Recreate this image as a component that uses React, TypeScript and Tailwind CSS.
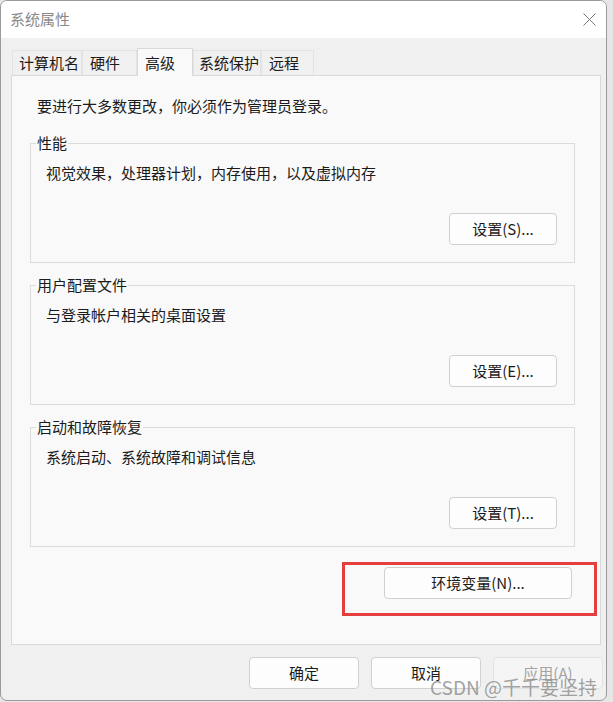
const font = { fontFamily: '"Noto Sans CJK SC", "Noto Sans", sans-serif' };

const tabs = [
  { label: '计算机名', w: 'w-[70px] pl-[6px]' },
  { label: '硬件', w: 'w-[55px] pl-[7px]' },
  { label: '高级', w: 'w-[56px] pl-[7px]', active: true },
  { label: '系统保护', w: 'w-[68px] pl-[5px]' },
  { label: '远程', w: 'w-[53px] pl-[7px]' },
];

const groups = [
  { title: '性能', desc: '视觉效果，处理器计划，内存使用，以及虚拟内存', btn: '设置(S)...' },
  { title: '用户配置文件', desc: '与登录帐户相关的桌面设置', btn: '设置(E)...' },
  { title: '启动和故障恢复', desc: '系统启动、系统故障和调试信息', btn: '设置(T)...' },
];

function Btn({ children, className = '' }: { children: React.ReactNode; className?: string }) {
  return (
    <button
      className={`flex h-[32px] items-center justify-center rounded-[4px] border border-[#d0d0d0] bg-[#fdfdfd] text-[15px] leading-[20px] text-[#1b1b1b] ${className}`}
    >
      {children}
    </button>
  );
}

export default function App() {
  return (
    <div className="relative h-[702px] w-[613px] overflow-hidden bg-[#e6e6e6]" style={font}>
      <div className="flex h-[701px] w-[607px] flex-col overflow-hidden rounded-[7px] border border-[#9a9a9a] bg-[#f0f0f0]">
        {/* title bar */}
        <div className="flex h-[37px] shrink-0 items-center justify-between bg-white pl-[9px] pr-[9px]">
          <span className="-mt-[1px] text-[15px] leading-[20px] text-[#8a8a8a]">系统属性</span>
          <svg width="13" height="13" viewBox="0 0 13 13" className="mr-[1px]">
            <path d="M0.5 0.5 L12.5 12.5 M12.5 0.5 L0.5 12.5" stroke="#7a7a7a" strokeWidth="1" fill="none" />
          </svg>
        </div>

        <div className="flex flex-1 flex-col pl-[10px] pr-[5px] pt-[10px]">
          {/* tabs */}
          <div className="flex h-[27px] items-end pl-[1px]">
            {tabs.map((t) =>
              t.active ? (
                <div
                  key={t.label}
                  className={`relative z-10 -mb-px flex h-[28px] items-center border border-b-0 border-[#d9d9d9] bg-[#f9f9f9] text-[15px] leading-[20px] text-[#1b1b1b] ${t.w}`}
                >
                  {t.label}
                </div>
              ) : (
                <div
                  key={t.label}
                  className={`flex h-[25px] items-center border border-b-0 border-[#e3e3e3] bg-[#f0f0f0] text-[15px] leading-[20px] text-[#1b1b1b] ${t.w}`}
                >
                  {t.label}
                </div>
              ),
            )}
          </div>

          {/* panel */}
          <div className="flex h-[570px] flex-col border border-[#dadada] bg-[#f9f9f9]">
            <p className="ml-[25px] mt-[20px] text-[15px] leading-[20px] text-[#1b1b1b]">
              要进行大多数更改，你必须作为管理员登录。
            </p>

            {groups.map((g, i) => (
              <fieldset
                key={g.title}
                className={`ml-[18px] mr-[25px] flex flex-col border border-[#dcdcdc] px-[15px] pb-[17px] ${i === 0 ? 'mt-[17px]' : 'mt-[12px]'}`}
              >
                <legend className="ml-[-10px] px-[1px] text-[15px] leading-[20px] text-[#1b1b1b]">{g.title}</legend>
                <p className="mt-[10px] text-[15px] leading-[20px] text-[#1b1b1b]">{g.desc}</p>
                <div className="mt-[30px] flex justify-end pr-[2px]">
                  <Btn className="w-[108px]">{g.btn}</Btn>
                </div>
              </fieldset>
            ))}

            <div className="ml-auto mr-[3px] mt-[15px] border-[3px] border-[#e53e3e] pb-[14px] pl-[39px] pr-[22px] pt-[2px]">
              <Btn className="w-[188px]">环境变量(N)...</Btn>
            </div>
          </div>

          {/* bottom buttons */}
          <div className="-mr-[2px] mt-[12px] flex justify-end gap-[12px]">
            <Btn className="w-[110px]">确定</Btn>
            <Btn className="w-[110px]">取消</Btn>
            <button className="flex h-[32px] w-[110px] items-center justify-center rounded-[4px] border border-[#e3e3e3] bg-[#f5f5f5] text-[15px] leading-[20px] text-[#a3a3a3]">
              应用(A)
            </button>
          </div>
        </div>
      </div>

      {/* watermark */}
      <div className="pointer-events-none absolute bottom-[3px] right-[16px] text-[19px] leading-[24px] text-[#8a8a8a]/80">
        CSDN @千千要坚持
      </div>
    </div>
  );
}
